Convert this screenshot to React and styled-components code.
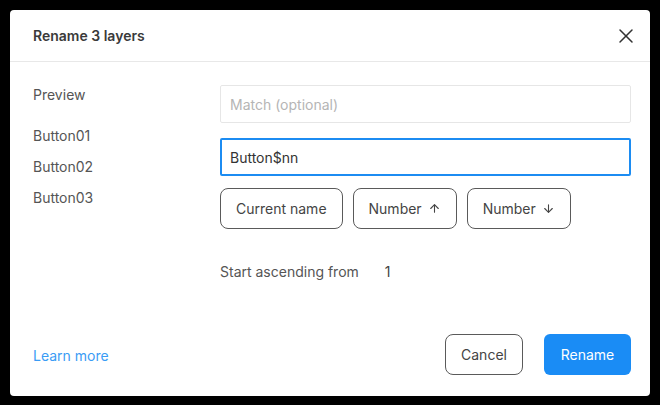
import React, { useState } from "react";
import styled, { createGlobalStyle } from "styled-components";
import { X, ArrowUp, ArrowDown } from "lucide-react";

const GlobalStyle = createGlobalStyle`
  html, body {
    margin: 0;
    padding: 0;
    background: #000;
  }
  body {
    font-family: Inter, "Noto Sans", sans-serif;
    -webkit-font-smoothing: antialiased;
  }
`;

const App = () => {
  const [match, setMatch] = useState("");
  const [pattern, setPattern] = useState("Button$nn");
  const layers = ["Button01", "Button02", "Button03"];

  return (
    <>
      <GlobalStyle />
      <Dialog>
        <Header>
          <Title>Rename 3 layers</Title>
          <CloseButton aria-label="Close">
            <X size={24} strokeWidth={1.5} />
          </CloseButton>
        </Header>
        <Body>
          <PreviewColumn>
            <PreviewLabel>Preview</PreviewLabel>
            <LayerList>
              {layers.map((name) => (
                <LayerName key={name}>{name}</LayerName>
              ))}
            </LayerList>
          </PreviewColumn>
          <FormColumn>
            <TextInput
              placeholder="Match (optional)"
              value={match}
              onChange={(e) => setMatch(e.target.value)}
            />
            <TextInput
              $focused
              autoFocus
              value={pattern}
              onChange={(e) => setPattern(e.target.value)}
            />
            <TokenRow>
              <TokenButton>Current name</TokenButton>
              <TokenButton>
                Number <ArrowUp size={13} strokeWidth={2} />
              </TokenButton>
              <TokenButton>
                Number <ArrowDown size={13} strokeWidth={2} />
              </TokenButton>
            </TokenRow>
            <StartRow>
              <span>Start ascending from</span>
              <StartValue>1</StartValue>
            </StartRow>
          </FormColumn>
        </Body>
        <Footer>
          <LearnMore href="#">Learn more</LearnMore>
          <Actions>
            <SecondaryButton>Cancel</SecondaryButton>
            <PrimaryButton>Rename</PrimaryButton>
          </Actions>
        </Footer>
      </Dialog>
    </>
  );
};

const Dialog = styled.div`
  margin: 10px;
  width: 640px;
  height: 386px;
  background: #fff;
  border-radius: 4px;
  display: flex;
  flex-direction: column;
  overflow: hidden;
`;

const Header = styled.div`
  height: 51px;
  flex-shrink: 0;
  display: flex;
  align-items: center;
  justify-content: space-between;
  padding: 0 10px 0 23px;
  border-bottom: 1px solid #e8e8e8;
`;

const Title = styled.h1`
  margin: 0;
  font-size: 14px;
  font-weight: 600;
  color: #3a3a3a;
`;

const CloseButton = styled.button`
  border: none;
  background: none;
  padding: 0;
  width: 28px;
  height: 28px;
  display: flex;
  align-items: center;
  justify-content: center;
  color: #333;
  cursor: pointer;
`;

const Body = styled.div`
  flex: 1;
  display: grid;
  grid-template-columns: 187px 1fr;
  padding: 23px 19px 0 23px;
`;

const PreviewColumn = styled.div`
  display: flex;
  flex-direction: column;
`;

const PreviewLabel = styled.div`
  font-size: 14px;
  color: #555;
  line-height: 17px;
  margin-top: 1px;
`;

const LayerList = styled.div`
  display: flex;
  flex-direction: column;
  gap: 14px;
  margin-top: 24px;
`;

const LayerName = styled.div`
  font-size: 14px;
  color: #555;
  line-height: 17px;
`;

const FormColumn = styled.div`
  display: flex;
  flex-direction: column;
`;

const TextInput = styled.input`
  box-sizing: border-box;
  height: 38px;
  width: 100%;
  margin-bottom: ${(p) => (p.$focused ? "12px" : "15px")};
  padding: 0 ${(p) => (p.$focused ? "8px" : "9px")};
  font-family: inherit;
  font-size: 14px;
  color: #333;
  border: ${(p) => (p.$focused ? "2px solid #1c8cf2" : "1px solid #e6e6e6")};
  border-radius: 2px;
  outline: none;
  background: #fff;
  caret-color: #333;
  &::placeholder {
    color: #b5b5b5;
  }
`;

const TokenRow = styled.div`
  display: flex;
  gap: 10px;
`;

const TokenButton = styled.button`
  box-sizing: border-box;
  height: 41px;
  padding: 0 15px;
  display: flex;
  align-items: center;
  gap: 6px;
  font-family: inherit;
  font-size: 14px;
  color: #444;
  background: #fff;
  border: 1.5px solid #5a5a5a;
  border-radius: 8px;
  cursor: pointer;
`;

const StartRow = styled.div`
  display: flex;
  align-items: center;
  margin-top: 34px;
  font-size: 14px;
  color: #555;
  line-height: 17px;
`;

const StartValue = styled.span`
  margin-left: 26px;
  color: #444;
`;

const Footer = styled.div`
  height: 84px;
  flex-shrink: 0;
  display: flex;
  align-items: center;
  justify-content: space-between;
  padding: 0 19px 0 23px;
  box-sizing: border-box;
`;

const LearnMore = styled.a`
  font-size: 14px;
  color: #3a9cf5;
  text-decoration: none;
  margin-top: 3px;
`;

const Actions = styled.div`
  display: flex;
  gap: 21px;
`;

const SecondaryButton = styled.button`
  box-sizing: border-box;
  height: 41px;
  width: 78px;
  font-family: inherit;
  font-size: 14px;
  color: #444;
  background: #fff;
  border: 1.5px solid #5a5a5a;
  border-radius: 8px;
  cursor: pointer;
`;

const PrimaryButton = styled.button`
  box-sizing: border-box;
  height: 41px;
  width: 87px;
  font-family: inherit;
  font-size: 14px;
  color: #fff;
  background: #1a8cf5;
  border: none;
  border-radius: 6px;
  cursor: pointer;
`;

export default App;
